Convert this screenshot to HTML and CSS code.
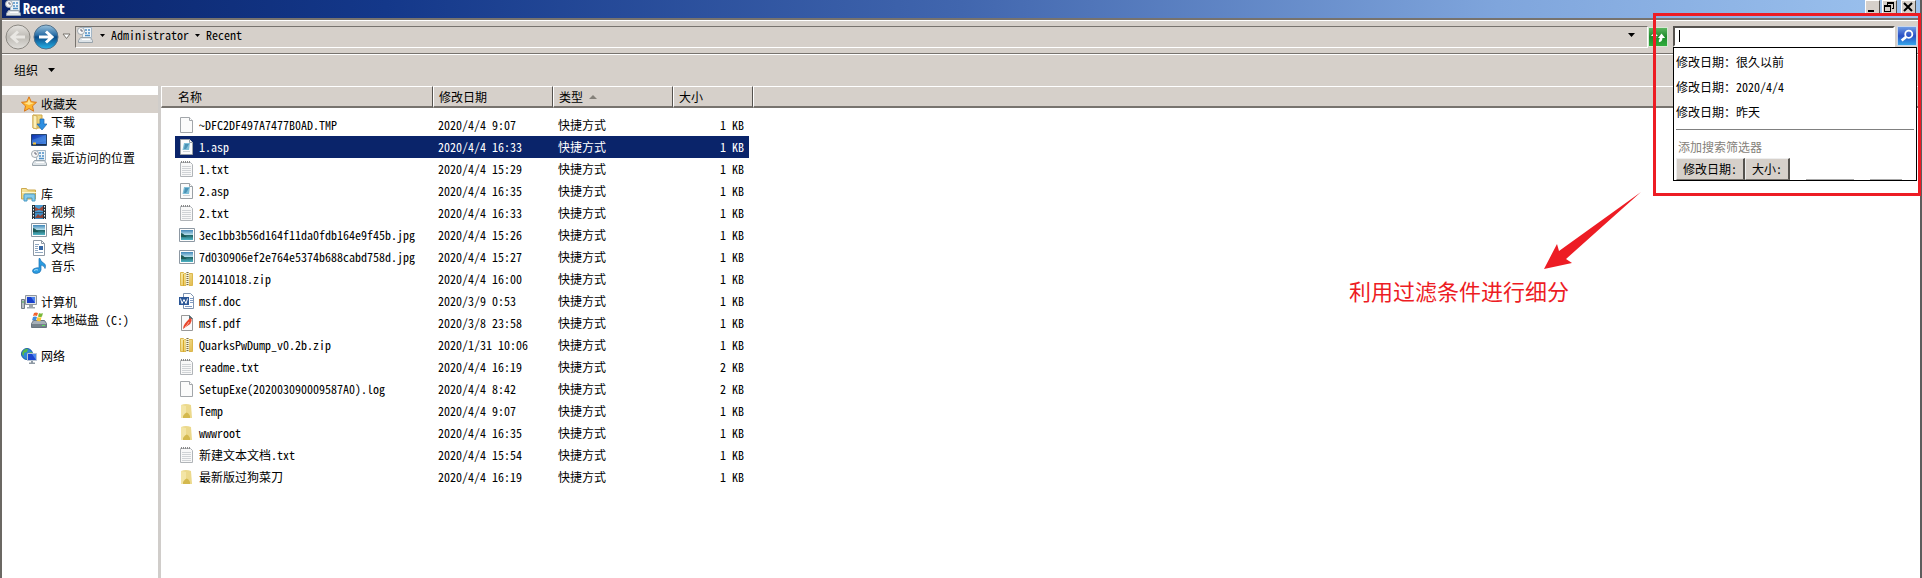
FILE: index.html
```html
<!DOCTYPE html>
<html lang="zh-CN">
<head>
<meta charset="utf-8">
<title>Recent</title>
<link rel="stylesheet" href="styles.css">
</head>
<body>
<svg class="defs" aria-hidden="true">
  <defs>
    <linearGradient id="g-blue" x1="0" y1="0" x2="0" y2="1"><stop offset="0" stop-color="#9cc3dc"/><stop offset=".42" stop-color="#2a6fa8"/><stop offset=".5" stop-color="#0b4a86"/><stop offset="1" stop-color="#25b4ea"/></linearGradient>
    <linearGradient id="g-grey" x1="0" y1="0" x2="0" y2="1"><stop offset="0" stop-color="#e6e4e0"/><stop offset=".5" stop-color="#bdbab4"/><stop offset="1" stop-color="#e2e0dc"/></linearGradient>
    <linearGradient id="g-folder" x1="0" y1="0" x2="1" y2="1"><stop offset="0" stop-color="#f8eba8"/><stop offset="1" stop-color="#e2bb4e"/></linearGradient>
    <linearGradient id="g-screen" x1="0" y1="0" x2="1" y2="1"><stop offset="0" stop-color="#0c2fae"/><stop offset="1" stop-color="#4f94ea"/></linearGradient>
    <linearGradient id="g-sky" x1="0" y1="0" x2="0" y2="1"><stop offset="0" stop-color="#3f86b8"/><stop offset=".5" stop-color="#bfe4ee"/><stop offset=".55" stop-color="#246a6c"/><stop offset="1" stop-color="#4fb4c6"/></linearGradient>
    <symbol id="i-recent" viewBox="0 0 16 16">
      <path d="M5.500.5h9v10h-9z" fill="#eef4f8" stroke="#a3b6c6"/>
      <path d="M8 3h2M11 3h2M8 6h2M11 6h2M8 8.500h5" stroke="#4d8fc6" stroke-width="1.500"/>
      <path d="M3.500 10.500h10l2 3v2h-14v-2z" fill="#dde3e7" stroke="#98a3ab"/>
      <path d="M5 12.500h8" stroke="#fff"/>
      <circle cx="4" cy="4" r="3.500" fill="#f7f7f7" stroke="#a0a8ae"/>
      <path d="M4 2v2h2" fill="none" stroke="#667"/>
    </symbol>
    <symbol id="i-star" viewBox="0 0 16 16">
      <path d="M8 .8l2.200 4.900 5.300.600-4 3.600 1.100 5.300L8 12.500l-4.600 2.700 1.100-5.300-4-3.600 5.300-.600z" fill="#fdb62f" stroke="#d9781b"/>
      <path d="M8 3l1.500 3.600 3.500.400-5 2-5-2 3.500-.400z" fill="#ffe391"/>
    </symbol>
    <symbol id="i-down" viewBox="0 0 16 16">
      <path d="M2 1h9v13H2z" fill="url(#g-folder)" stroke="#cfa648"/>
      <path d="M2 1l4 1v13l-4-1z" fill="#fbf0b9" stroke="#d0ab52"/>
      <path d="M9 5h4v5h3l-5 6-5-6h3z" fill="#2d8fe2" stroke="#1c66ad" stroke-width=".7"/>
    </symbol>
    <symbol id="i-desk" viewBox="0 0 16 16">
      <path d="M.5 2.500h15v11H.5z" fill="url(#g-screen)" stroke="#27456f"/>
      <path d="M15 3v6L1 12V8z" fill="#5eaaf0" opacity=".35"/>
      <path d="M1 12.500h14" stroke="#1b3150"/><path d="M2 11.500h3" stroke="#f5c542" stroke-width="2"/>
    </symbol>
    <symbol id="i-lib" viewBox="0 0 16 16">
      <path d="M.5 2.500h5l1 1.500h8v9H.5z" fill="url(#g-folder)" stroke="#cda94f"/>
      <path d="M1 6h14v1H1z" fill="#fdf6ce"/>
      <path d="M3 15V9q0-1 1-1h9q1 0 1 1v6h-3v-3H6v3z" fill="#86cbea" stroke="#4b9ac4"/>
    </symbol>
    <symbol id="i-video" viewBox="0 0 16 16">
      <path d="M1 1h14v14H1z" fill="#26333d"/>
      <path d="M4 1h8v7H4z" fill="#4c9bd0"/><path d="M4 8.500h8V15H4z" fill="#3d8dc6"/>
      <path d="M4 3l4 2 4-3v5l-4-1-4 1z" fill="#9e4a3a"/><path d="M4 14l3-4 2 2 3-2v4z" fill="#8c4437"/>
      <path d="M2.500 2v13M13.500 2v13" stroke="#eef3f6" stroke-dasharray="1.500 1.500"/>
    </symbol>
    <symbol id="i-pic" viewBox="0 0 16 16">
      <path d="M.5 1.500h15v13H.5z" fill="#fdfdfd" stroke="#8d98a3"/>
      <path d="M2 3h12v10H2z" fill="url(#g-sky)"/>
      <path d="M2 6q2 0 4 2.500t8 1V10H2z" fill="#1f5a56"/>
    </symbol>
    <symbol id="i-docs" viewBox="0 0 16 16">
      <path d="M2.500.5h8l3 3v12h-11z" fill="#fff" stroke="#8e99a5"/>
      <path d="M10.500.5v3h3" fill="none" stroke="#8e99a5"/>
      <path d="M4 4.500h4M4 6.500h3M4 8.500h3M4 10.500h3M4 12.500h8" stroke="#8fa6bf"/>
      <path d="M8 6h4v4H8z" fill="#3668a6"/>
    </symbol>
    <symbol id="i-music" viewBox="0 0 16 16">
      <path d="M9 .5q.5 3 3.500 4.500t1.500 5.500q0-2.500-4-3.500v5q-.5 3-4.500 3.500Q1.500 15.500 1.500 13T5 10q2-.5 3 0V.5z" fill="#2a9be0" stroke="#1b70b3" stroke-width=".7"/>
      <path d="M3 12.500q2-1.500 4-.5" stroke="#a9e2ff" fill="none"/>
    </symbol>
    <symbol id="i-pc" viewBox="0 0 16 16">
      <path d="M.5 5.500h3v9h-3z" fill="#b9bfc5" stroke="#737c84"/>
      <path d="M1 8h2" stroke="#47b04c"/>
      <path d="M4.500 1.500h11v9h-11z" fill="#dfe3e6" stroke="#8f979e"/>
      <path d="M6 3h8v6H6z" fill="#1a3fcb"/><path d="M10 3h4v6z" fill="#4c82ec"/>
      <path d="M8 11h4v2h2v1.500H6V13h2z" fill="#9da5ac"/>
    </symbol>
    <symbol id="i-disk" viewBox="0 0 16 16">
      <path d="M2.500 8.500h11l2 3v4H.5v-4z" fill="#a6b0b8" stroke="#69757e"/>
      <path d="M1 12h14v3H1z" fill="#75828b"/><path d="M11 13.500h3" stroke="#5ce05f"/>
      <path d="M3 1q2-1 4 0L6 4Q4 3 2 4z" fill="#f0622d"/><path d="M8 1q2 1 4 0l-1 3.500q-2 1-4 0z" fill="#79b83a"/>
      <path d="M2 5q2-1 4 0L5 8.500Q3 7.500 1 8.500z" fill="#3f8bdc"/><path d="M6.500 5q2 1 4 0l-1 4q-2 .5-4-.5z" fill="#fbc52f"/>
    </symbol>
    <symbol id="i-net" viewBox="0 0 16 16">
      <circle cx="6" cy="6" r="5.500" fill="#2f86d8" stroke="#1c5fa3"/>
      <path d="M2 3q3-3 5-2l-1 3-3 1v3L1 6zM7 5l4-1v3L8 9z" fill="#57b947"/>
      <path d="M6.500 5.500h9v7h-9z" fill="#1b45cf" stroke="#b8c4d2"/><path d="M11 6h4v6z" fill="#4c86ee"/>
      <path d="M10 13h2v1.500h2V16H8v-1.500h2z" fill="#8e99a4"/>
    </symbol>
    <symbol id="i-page" viewBox="0 0 16 16">
      <path d="M1.500.5h9l3 3v12h-12z" fill="#fbfbfb" stroke="#a2a6aa"/><path d="M10.500.5v3h3" fill="#fff" stroke="#a2a6aa"/>
    </symbol>
    <symbol id="i-txt" viewBox="0 0 16 16">
      <path d="M1.500 1.500h10l2 2v12h-12z" fill="#f8f8f8" stroke="#b0b4b8"/>
      <path d="M3 5.500h9M3 7.500h9M3 9.500h9M3 11.500h9M3 13.500h9" stroke="#d0d3d6"/>
      <path d="M2 1h10" stroke="#8a8a8a" stroke-width="2" stroke-dasharray="1 1"/>
    </symbol>
    <symbol id="i-asp" viewBox="0 0 16 16">
      <path d="M1.500.5h9l3 3v12h-12z" fill="#fbfbfb" stroke="#9aa0a5"/><path d="M10.500.5v3h3" fill="#fff" stroke="#9aa0a5"/>
      <path d="M5 4h6l-1 7H3.500z" fill="#7fbfd8"/><path d="M6 5h4l-3 5H5z" fill="#4b93b6"/><path d="M4 12.500h7" stroke="#cdd2d5"/>
    </symbol>
    <symbol id="i-zip" viewBox="0 0 16 16">
      <path d="M1.500 1.500h3l1 1h8v12h-12z" fill="url(#g-folder)" stroke="#dcb84e"/>
      <path d="M7 1h3v14H7z" fill="#f6f1da"/><path d="M8.500 1v14" stroke="#7b7048" stroke-width="2" stroke-dasharray="1 1"/>
      <path d="M4.500 3v12" stroke="#d8a92a"/>
    </symbol>
    <symbol id="i-doc" viewBox="0 0 16 16">
      <path d="M4.500.5h7l3 3v12h-10z" fill="#fff" stroke="#7e93b0"/><path d="M11 5.500h3M11 7.500h3M11 9.500h3M6 13.500h7" stroke="#7f9bc4"/>
      <path d="M0 4h10v8H0z" fill="#2b5797"/><path d="M1.500 5.500L3 10.500l2-4 2 4 1.500-5" fill="none" stroke="#fff"/>
    </symbol>
    <symbol id="i-pdf" viewBox="0 0 16 16">
      <path d="M2.500.5h8l3 3v12h-11z" fill="#fafafa" stroke="#999"/><path d="M10 0l4 4h-4z" fill="#4f6b75"/>
      <path d="M4 14q0-3 2-5.500T11 3q2 0 1.500 3T9 10.500 4 14z" fill="#e8482e"/><path d="M6 12q2-1 4-5" stroke="#f8a48f" fill="none"/>
    </symbol>
    <symbol id="i-folder" viewBox="0 0 16 16">
      <path d="M2 2q5-2 10 0l1 13H2z" fill="#ecd98c"/><path d="M2 2l5 1v12H2z" fill="#f3e5a6"/><path d="M4 13q4-7 7 0v2H4z" fill="#d4b94e"/>
    </symbol>
  </defs>
</svg>

<div class="window">
  <header class="titlebar">
    <svg class="icon"><use href="#i-recent"/></svg>
    <h1 class="title">Recent</h1>
    <div class="controls">
      <button class="ctl" aria-label="最小化"><svg viewBox="0 0 12 12"><path d="M2 9h6v2H2z"/></svg></button>
      <button class="ctl" aria-label="还原"><svg viewBox="0 0 12 12"><path d="M4 1h7v2H4zM10 3h1v5H9V7h1zM4 3h1v1H4zM1 4h7v2H1zM1 6h1v5H1zM7 6h1v5H7zM2 10h5v1H2z"/></svg></button>
      <button class="ctl close" aria-label="关闭"><svg viewBox="0 0 12 12"><path d="M2 2l8 8M10 2l-8 8" stroke="#000" stroke-width="2"/></svg></button>
    </div>
  </header>

  <nav class="navbar">
    <div class="travel">
      <button class="round" aria-label="后退"><svg viewBox="0 0 26 26"><circle cx="13" cy="13" r="12" fill="url(#g-grey)" stroke="#8b8882"/><path d="M20 13H8M13 7.500L7 13l6 5.500" fill="none" stroke="#e9e7e3" stroke-width="3"/></svg></button>
      <button class="round" aria-label="前进"><svg viewBox="0 0 26 26"><circle cx="13" cy="13" r="12" fill="url(#g-blue)" stroke="#51708a"/><path d="M6 13h12M13 7.500l6 5.500-6 5.500" fill="none" stroke="#fff" stroke-width="3"/></svg></button>
      <button class="pages" aria-label="最近的页面"><svg viewBox="0 0 9 7"><path d="M1 1h7L4.500 5.500z" fill="#fff" stroke="#77736c"/></svg></button>
    </div>
    <div class="address">
      <svg class="icon"><use href="#i-recent"/></svg>
      <button class="crumb-arrow" aria-label="位置"><svg viewBox="0 0 5 3"><path d="M0 0h5L2.500 3z"/></svg></button>
      <a class="crumb" href="#">Administrator</a>
      <button class="crumb-arrow" aria-label="子文件夹"><svg viewBox="0 0 5 3"><path d="M0 0h5L2.500 3z"/></svg></button>
      <a class="crumb" href="#">Recent</a>
      <button class="history" aria-label="以前的位置"><svg viewBox="0 0 7 4"><path d="M0 0h7L3.500 4z"/></svg></button>
    </div>
    <button class="refresh" aria-label="刷新"><svg viewBox="0 0 18 18"><path d="M4 12V8H1l4-4 4 4H7v2zM13 5l4 5h-3q0 4-4 5v-3q1 0 1-2H9z" fill="#fff"/></svg></button>
    <div class="search">
      <input class="search-input" type="text" aria-label="搜索"><span class="caret"></span>
      <button class="search-go" aria-label="开始搜索"><svg viewBox="0 0 18 18"><circle cx="11" cy="7" r="4" fill="none" stroke="#fff" stroke-width="2"/><path d="M8 10l-5 4" stroke="#fff" stroke-width="3"/></svg></button>
      <div class="suggest">
        <button class="suggestion">修改日期：很久以前</button>
        <button class="suggestion">修改日期：2020/4/4</button>
        <button class="suggestion">修改日期：昨天</button>
        <hr class="rule">
        <p class="filter-label">添加搜索筛选器</p>
        <div class="filters">
          <button class="filter">修改日期:</button>
          <button class="filter">大小:</button>
          <span class="stub"></span><span class="stub short"></span>
        </div>
      </div>
    </div>
    <div class="frame"></div>
  </nav>

  <div class="commands">
    <button class="organize">组织 <svg viewBox="0 0 7 4"><path d="M0 0h7L3.500 4z"/></svg></button>
  </div>

  <div class="body">
    <aside class="sidebar">
      <ul class="group">
        <li><a class="place root current" href="#"><svg class="icon"><use href="#i-star"/></svg>收藏夹</a></li>
        <li><a class="place" href="#"><svg class="icon"><use href="#i-down"/></svg>下载</a></li>
        <li><a class="place" href="#"><svg class="icon"><use href="#i-desk"/></svg>桌面</a></li>
        <li><a class="place" href="#"><svg class="icon"><use href="#i-recent"/></svg>最近访问的位置</a></li>
      </ul>
      <ul class="group">
        <li><a class="place root" href="#"><svg class="icon"><use href="#i-lib"/></svg>库</a></li>
        <li><a class="place" href="#"><svg class="icon"><use href="#i-video"/></svg>视频</a></li>
        <li><a class="place" href="#"><svg class="icon"><use href="#i-pic"/></svg>图片</a></li>
        <li><a class="place" href="#"><svg class="icon"><use href="#i-docs"/></svg>文档</a></li>
        <li><a class="place" href="#"><svg class="icon"><use href="#i-music"/></svg>音乐</a></li>
      </ul>
      <ul class="group">
        <li><a class="place root" href="#"><svg class="icon"><use href="#i-pc"/></svg>计算机</a></li>
        <li><a class="place" href="#"><svg class="icon"><use href="#i-disk"/></svg>本地磁盘 (C:)</a></li>
      </ul>
      <ul class="group">
        <li><a class="place root" href="#"><svg class="icon"><use href="#i-net"/></svg>网络</a></li>
      </ul>
    </aside>

    <main class="files">
      <table class="list">
        <colgroup><col class="c-name"><col class="c-date"><col class="c-type"><col class="c-size"><col></colgroup>
        <thead><tr><th class="name">名称</th><th>修改日期</th><th>类型<svg class="sort" viewBox="0 0 8 4"><path d="M0 4h8L4 0z" fill="#85817a"/></svg></th><th>大小</th><th class="rest"></th></tr></thead>
        <tbody>
          <tr><td class="name"><span><svg class="icon"><use href="#i-page"/></svg>~DFC2DF497A7477B0AD.TMP</span></td><td>2020/4/4 9:07</td><td>快捷方式</td><td class="size">1 KB</td><td class="rest"></td></tr>
          <tr class="selected"><td class="name"><span><svg class="icon"><use href="#i-asp"/></svg>1.asp</span></td><td>2020/4/4 16:33</td><td>快捷方式</td><td class="size">1 KB</td><td class="rest"></td></tr>
          <tr><td class="name"><span><svg class="icon"><use href="#i-txt"/></svg>1.txt</span></td><td>2020/4/4 15:29</td><td>快捷方式</td><td class="size">1 KB</td><td class="rest"></td></tr>
          <tr><td class="name"><span><svg class="icon"><use href="#i-asp"/></svg>2.asp</span></td><td>2020/4/4 16:35</td><td>快捷方式</td><td class="size">1 KB</td><td class="rest"></td></tr>
          <tr><td class="name"><span><svg class="icon"><use href="#i-txt"/></svg>2.txt</span></td><td>2020/4/4 16:33</td><td>快捷方式</td><td class="size">1 KB</td><td class="rest"></td></tr>
          <tr><td class="name"><span><svg class="icon"><use href="#i-pic"/></svg>3ec1bb3b56d164f11da0fdb164e9f45b.jpg</span></td><td>2020/4/4 15:26</td><td>快捷方式</td><td class="size">1 KB</td><td class="rest"></td></tr>
          <tr><td class="name"><span><svg class="icon"><use href="#i-pic"/></svg>7d030906ef2e764e5374b688cabd758d.jpg</span></td><td>2020/4/4 15:27</td><td>快捷方式</td><td class="size">1 KB</td><td class="rest"></td></tr>
          <tr><td class="name"><span><svg class="icon"><use href="#i-zip"/></svg>20141018.zip</span></td><td>2020/4/4 16:00</td><td>快捷方式</td><td class="size">1 KB</td><td class="rest"></td></tr>
          <tr><td class="name"><span><svg class="icon"><use href="#i-doc"/></svg>msf.doc</span></td><td>2020/3/9 0:53</td><td>快捷方式</td><td class="size">1 KB</td><td class="rest"></td></tr>
          <tr><td class="name"><span><svg class="icon"><use href="#i-pdf"/></svg>msf.pdf</span></td><td>2020/3/8 23:58</td><td>快捷方式</td><td class="size">1 KB</td><td class="rest"></td></tr>
          <tr><td class="name"><span><svg class="icon"><use href="#i-zip"/></svg>QuarksPwDump_v0.2b.zip</span></td><td>2020/1/31 10:06</td><td>快捷方式</td><td class="size">1 KB</td><td class="rest"></td></tr>
          <tr><td class="name"><span><svg class="icon"><use href="#i-txt"/></svg>readme.txt</span></td><td>2020/4/4 16:19</td><td>快捷方式</td><td class="size">2 KB</td><td class="rest"></td></tr>
          <tr><td class="name"><span><svg class="icon"><use href="#i-page"/></svg>SetupExe(202003090009587A0).log</span></td><td>2020/4/4 8:42</td><td>快捷方式</td><td class="size">2 KB</td><td class="rest"></td></tr>
          <tr><td class="name"><span><svg class="icon"><use href="#i-folder"/></svg>Temp</span></td><td>2020/4/4 9:07</td><td>快捷方式</td><td class="size">1 KB</td><td class="rest"></td></tr>
          <tr><td class="name"><span><svg class="icon"><use href="#i-folder"/></svg>wwwroot</span></td><td>2020/4/4 16:35</td><td>快捷方式</td><td class="size">1 KB</td><td class="rest"></td></tr>
          <tr><td class="name"><span><svg class="icon"><use href="#i-txt"/></svg>新建文本文档.txt</span></td><td>2020/4/4 15:54</td><td>快捷方式</td><td class="size">1 KB</td><td class="rest"></td></tr>
          <tr><td class="name"><span><svg class="icon"><use href="#i-folder"/></svg>最新版过狗菜刀</span></td><td>2020/4/4 16:19</td><td>快捷方式</td><td class="size">1 KB</td><td class="rest"></td></tr>
        </tbody>
      </table>
      <svg class="arrow" viewBox="0 0 98 78" aria-hidden="true"><path d="M97 0L15 59l-2-7L0 77l28-6-6-4z" fill="#ed1c24"/></svg>
      <p class="note">利用过滤条件进行细分</p>
    </main>
  </div>
</div>
</body>
</html>
```
FILE: styles.css
```css
* { box-sizing: border-box; }

body {
  margin: 0;
  background: #fff;
  color: #000;
  font: 12px/18px "Noto Sans Mono CJK SC", "Noto Sans CJK SC", monospace;
}

button, input {
  margin: 0;
  padding: 0;
  border: 0;
  background: none;
  color: inherit;
  font: inherit;
}

button svg { display: block; }
a { color: inherit; text-decoration: none; }
ul { margin: 0; padding: 0; list-style: none; }
.defs { position: absolute; width: 0; height: 0; }
.icon { flex: none; width: 16px; height: 16px; }

.window {
  position: relative;
  display: flex;
  flex-direction: column;
  min-height: 100vh;
  border-left: 2px solid #6b6863;
  border-right: 2px solid #5d5d5d;
}

.titlebar {
  display: flex;
  align-items: center;
  gap: 2px;
  height: 18px;
  padding: 0 4px 2px 3px;
  background: linear-gradient(90deg, #0a246a, #14388a 20%, #4166ae 50%, #7fa5dc 78%, #9cc2ee);
  color: #fff;
}

.title { flex: 1; margin: 0; font-size: 14px; line-height: 14px; font-weight: 700; }
.controls { display: flex; align-self: flex-start; gap: 2px; }

.ctl {
  width: 15px;
  height: 14px;
  background: #d6d0ca;
  border: 1px solid;
  border-color: #fff #55524e #55524e #fff;
}

.ctl svg { width: 12px; height: 12px; }
.close { margin-left: 2px; }

.navbar {
  position: relative;
  display: flex;
  align-items: center;
  height: 36px;
  padding: 0 3px 0 3px;
  border-top: 2px solid #77736e;
  border-bottom: 1px solid #77736e;
  background: #d6d0ca;
  box-shadow: inset 0 1px #fff, 0 1px #fff;
}

.travel { display: flex; align-items: center; gap: 2px; width: 70px; }
.round { width: 26px; height: 26px; }
.pages { width: 9px; margin-left: 1px; }

.address {
  display: flex;
  flex: 1;
  align-items: center;
  gap: 6px;
  height: 22px;
  padding: 0 12px 3px 1px;
  border: 1px solid;
  border-color: #77736e #fff #fff #77736e;
}

.crumb-arrow { width: 5px; }
.address .icon { margin-right: 1px; }
.history { width: 7px; margin-left: auto; }

.refresh {
  width: 20px;
  height: 20px;
  padding: 1px;
  border: 1px solid #d8e8d4;
  background: linear-gradient(#5cb460, #1d8b2c 50%, #2fae3c);
}

.search { position: relative; display: flex; width: 244px; margin-left: 5px; }

.search-input {
  flex: 1;
  min-width: 0;
  height: 21px;
  border: 2px solid;
  border-color: #55524e #fff #fff #55524e;
  background: #fff;
}

.caret { position: absolute; left: 6px; top: 4px; width: 1px; height: 12px; background: #000; }

.search-go {
  width: 20px;
  height: 20px;
  margin-left: 2px;
  padding: 1px;
  border: 1px solid #c8d6ee;
  background: linear-gradient(#6f9be4, #2a4fc4 50%, #35a6ea);
}

.suggest {
  position: absolute;
  z-index: 2;
  top: 21px;
  left: 0;
  right: 0;
  padding: 1px 2px 0;
  border: 1px solid #000;
  background: #fff;
}

.suggestion { display: block; width: 100%; height: 25px; text-align: left; }
.rule { height: 1px; margin: 5px 0 8px; border: 0; background: #808080; }
.filter-label { margin: 0; padding-left: 2px; color: #85817a; }
.filters { display: flex; align-items: flex-end; margin-top: 2px; }

.filter {
  height: 22px;
  padding: 0 6px;
  border: 1px solid;
  border-color: #eee #55524e #77736e #eee;
  border-right-width: 2px;
  background: #d6d0ca;
}

.stub { width: 48px; height: 1px; margin-left: 16px; background: #a8a8a8; }
.short { width: 32px; }

.frame {
  position: absolute;
  z-index: 3;
  top: -7px;
  right: -1px;
  width: 268px;
  height: 183px;
  border: 3px solid #ed1c24;
  pointer-events: none;
}

.commands {
  display: flex;
  align-items: center;
  height: 32px;
  padding: 0 12px;
  background: linear-gradient(#fff 1px, #d6d0ca 1px);
}

.organize { display: flex; align-items: center; gap: 10px; }
.organize svg { width: 7px; height: 4px; }

.body { display: flex; flex: 1; }

.sidebar {
  display: flex;
  flex-direction: column;
  gap: 18px;
  width: 159px;
  padding-top: 9px;
  border-right: 3px solid #d0cdca;
}

.place { display: flex; align-items: center; gap: 4px; height: 18px; padding-left: 29px; }
.root { padding-left: 19px; }
.current { background: #d6d0ca; }

.files { position: relative; flex: 1; min-width: 0; }
.list { width: 100%; table-layout: fixed; border-collapse: separate; border-spacing: 0; }
.c-name { width: 272px; }
.c-date, .c-type { width: 120px; }
.c-size { width: 80px; }

th {
  height: 22px;
  padding: 0 0 0 5px;
  border-top: 1px solid #fff;
  border-left: 1px solid #fff;
  border-right: 1px solid #55524e;
  border-bottom: 2px solid #77736e;
  background: #d6d0ca;
  font-weight: 400;
  text-align: left;
}

th.name { padding-left: 16px; }
th.rest { border-right: 0; }
.sort { width: 8px; height: 4px; margin-left: 6px; vertical-align: 3px; }
tbody::before { content: ""; display: block; height: 6px; }

td { height: 22px; padding: 0; text-indent: 5px; white-space: nowrap; }
td.name { padding-left: 14px; text-indent: 0; }
td.name span { display: flex; align-items: center; gap: 4px; padding-left: 4px; }
td.size { padding-right: 9px; text-align: right; }
.selected td { background: #0a246a; color: #fff; }
.selected td.name { background: linear-gradient(90deg, transparent 14px, #0a246a 14px); }
.selected td.size { background: linear-gradient(270deg, transparent 4px, #0a246a 4px); }
.selected td.rest { background: none; }

.arrow { position: absolute; top: 106px; right: 278px; width: 98px; height: 78px; }

.note {
  position: absolute;
  top: 190px;
  right: 351px;
  margin: 0;
  color: #ed1c24;
  font: 22px/28px "Noto Sans CJK SC", sans-serif;
}
```
